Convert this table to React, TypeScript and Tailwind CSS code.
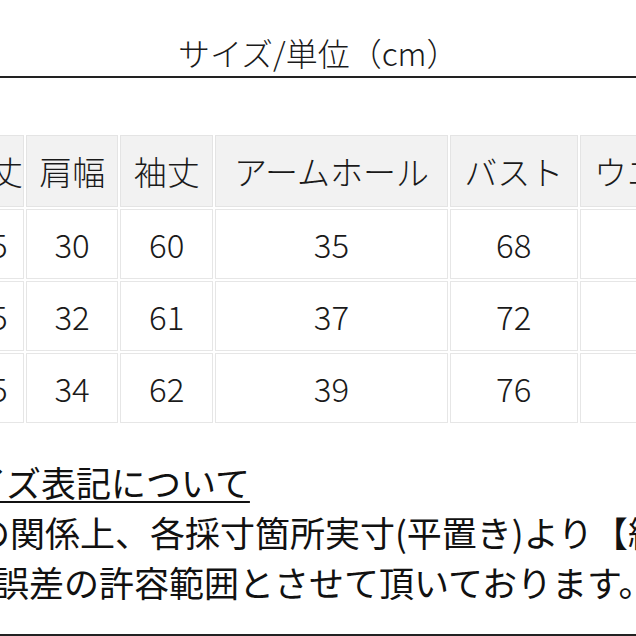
import React from "react";

const headers = ["着丈", "肩幅", "袖丈", "アームホール", "バスト", "ウエスト"];
const rows = [
  ["55", "30", "60", "35", "68", "60"],
  ["55", "32", "61", "37", "72", "64"],
  ["55", "34", "62", "39", "76", "68"],
];
const widths = ["w-[68px]", "w-[92px]", "w-[93px]", "w-[232px]", "w-[128px]", "w-[160px]"];

export default function App() {
  return (
    <div className="w-[636px] h-[636px] overflow-hidden bg-white text-[#1a1a1a] font-light font-['Noto_Sans_CJK_JP','Noto_Sans',sans-serif]">
      <div className="h-[76px] pt-[36px] pl-[178px]">
        <div className="h-[32px] leading-[32px] text-[32px] whitespace-nowrap">サイズ/単位（cm）</div>
      </div>
      <div className="h-[2px] bg-[#222]" />
      <table className="mt-[55px] ml-[-46px] table-fixed border-separate border-spacing-[2px] w-[788px]">
        <colgroup>
          {widths.map((w, i) => (
            <col key={i} className={w} />
          ))}
        </colgroup>
        <thead>
          <tr>
            {headers.map((h) => (
              <th
                key={h}
                className="h-[72px] p-0 font-light text-[33px] leading-none text-center whitespace-nowrap bg-[#f2f2f2] border border-[#e4e4e4]"
              >
                {h}
              </th>
            ))}
          </tr>
        </thead>
        <tbody>
          {rows.map((r, ri) => (
            <tr key={ri}>
              {r.map((v, ci) => (
                <td
                  key={ci}
                  className="h-[70px] p-0 text-[33px] leading-none text-center bg-white border border-[#e6e6e6]"
                >
                  {v}
                </td>
              ))}
            </tr>
          ))}
        </tbody>
      </table>
      <div className="mt-[32px] text-[35px] font-normal leading-[50px] whitespace-nowrap text-[#111]">
        <div className="h-[50px] ml-[-63px]">
          <span className="underline decoration-2 underline-offset-[4px]">サイズ表記について</span>
        </div>
        <div className="h-[50px] ml-[-130px]">※生地の関係上、各採寸箇所実寸(平置き)より【約1～3cm】程度の</div>
        <div className="h-[50px] ml-[-6px]">誤差の許容範囲とさせて頂いております。</div>
      </div>
      <div className="mt-[27px] h-[2px] bg-[#222]" />
    </div>
  );
}
